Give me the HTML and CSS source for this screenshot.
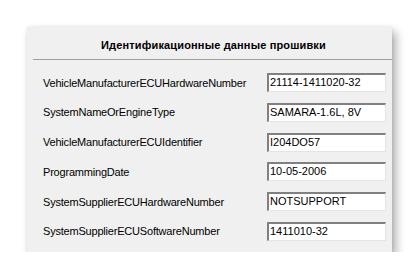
FILE: index.html
```html
<!DOCTYPE html>
<html>
<head>
<meta charset="utf-8">
<link rel="stylesheet" href="styles.css">
</head>
<body>
<div class="panel">
  <div class="title">Идентификационные данные прошивки</div>
  <div class="sep"></div>
  <div class="rows">
    <div class="row"><span class="label">VehicleManufacturerECUHardwareNumber</span><span class="field">21114-1411020-32</span></div>
    <div class="row"><span class="label">SystemNameOrEngineType</span><span class="field">SAMARA-1.6L, 8V</span></div>
    <div class="row"><span class="label">VehicleManufacturerECUIdentifier</span><span class="field">I204DO57</span></div>
    <div class="row"><span class="label">ProgrammingDate</span><span class="field">10-05-2006</span></div>
    <div class="row"><span class="label">SystemSupplierECUHardwareNumber</span><span class="field">NOTSUPPORT</span></div>
    <div class="row"><span class="label">SystemSupplierECUSoftwareNumber</span><span class="field">1411010-32</span></div>
  </div>
</div>
</body>
</html>
```
FILE: styles.css
```css
html, body {
  margin: 0;
  padding: 0;
  background: #ffffff;
}
body {
  padding: 27px 0 0 27px;
  font-family: "Liberation Sans", Arial, sans-serif;
  font-size: 11px;
  color: #000;
}
.panel {
  width: 365px;
  height: 225px;
  box-sizing: border-box;
  background: #f0f0f0;
  box-shadow: 4px 5px 9px rgba(0, 0, 0, 0.32), 0 0 3px rgba(0, 0, 0, 0.08);
  display: flex;
  flex-direction: column;
}
.title {
  font-weight: bold;
  text-align: center;
  letter-spacing: 0.15px;
  padding: 11px 0 0 8px;
  height: 21px;
  line-height: 14px;
  box-sizing: content-box;
}
.sep {
  margin: 0 0 0 6px;
  height: 1px;
  background: #a0a0a0;
}
.rows {
  display: flex;
  flex-direction: column;
  gap: 10.8px;
  padding: 13px 0 0 16px;
}
.row {
  display: flex;
  align-items: center;
  height: 19px;
}
.label {
  width: 224px;
  white-space: nowrap;
  letter-spacing: -0.2px;
}
.field {
  width: 119px;
  height: 19px;
  box-sizing: border-box;
  background: #ffffff;
  border-top: 2px solid #808080;
  border-left: 2px solid #808080;
  border-right: 1px solid #e4e4e4;
  border-bottom: 1px solid #e4e4e4;
  padding-left: 1px;
  line-height: 15px;
  white-space: nowrap;
}
```
